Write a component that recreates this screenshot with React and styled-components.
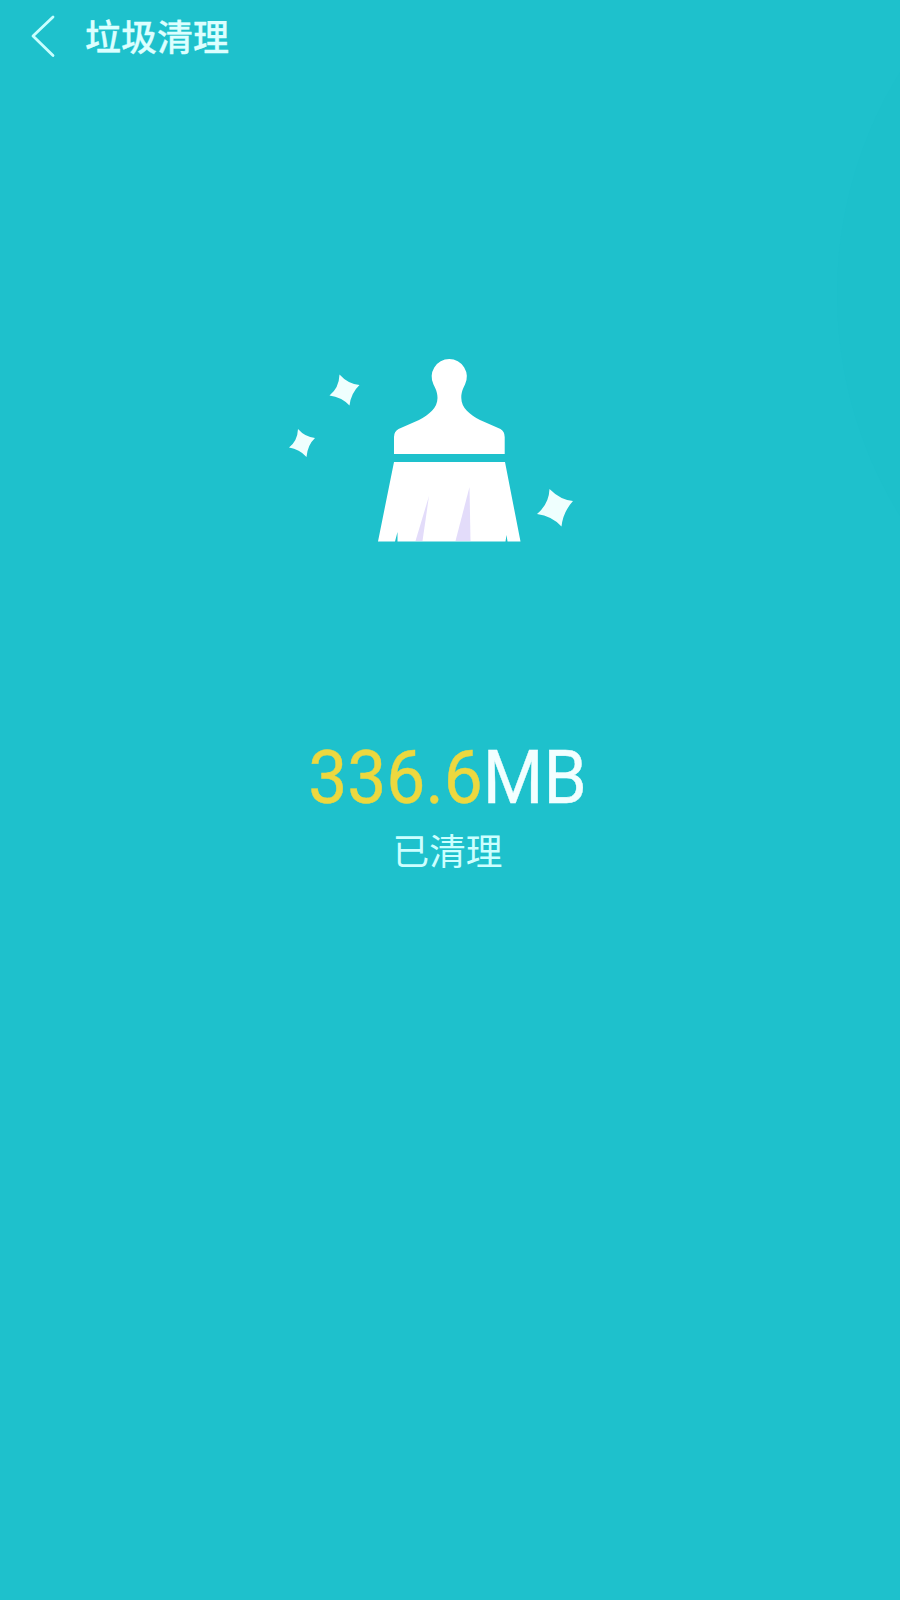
import React from "react";
import styled, { createGlobalStyle } from "styled-components";

const GlobalStyle = createGlobalStyle`
	body {
		margin: 0;
		background: #1ec1cc;
	}
`;

const Screen = styled.div`
	position: relative;
	width: 900px;
	height: 1600px;
	display: flex;
	flex-direction: column;
	align-items: center;
	overflow: hidden;
	box-sizing: border-box;
	background: #1ec1cc;
	color: #f2ffff;
	font-family: Roboto, "Noto Sans CJK SC", sans-serif;
`;

const Ripple = styled.div`
	position: absolute;
	left: 837px;
	top: -129px;
	width: 846px;
	height: 846px;
	border-radius: 50%;
	background: #1dc0cb;
`;

const Header = styled.header`
	position: relative;
	width: 100%;
	height: 74px;
	display: flex;
	align-items: center;
	padding-left: 28px;
	box-sizing: border-box;
`;

const BackButton = styled.button`
	display: flex;
	width: 30px;
	height: 44px;
	padding: 0;
	border: 0;
	background: none;
	color: #c8ffff;
`;

const Title = styled.h1`
	margin: 0 0 4px 27px;
	font-family: "Noto Sans CJK SC", sans-serif;
	font-size: 36px;
	font-weight: 500;
	line-height: 44px;
	color: #dcffff;
	-webkit-text-stroke: 0.3px #dcffff;
`;

const Illustration = styled.svg`
	position: relative;
	display: block;
	margin-top: 276px;
	width: 340px;
	height: 200px;
`;

const Result = styled.div`
	position: relative;
	display: flex;
	flex-direction: column;
	align-items: center;
	margin-top: 187px;
	padding-right: 5px;
`;

const Amount = styled.div`
	font-size: 69.5px;
	line-height: 84px;
	white-space: nowrap;
	transform: scaleY(1.06);
	-webkit-text-stroke: 0.4px currentColor;
`;

const Value = styled.span`
	color: #edd83f;
	-webkit-text-stroke: 0.4px #edd83f;
`;

const Status = styled.div`
	margin-top: 4px;
	font-family: "Noto Sans CJK SC", sans-serif;
	font-size: 36.7px;
	line-height: 48px;
	color: #ccffff;
`;

const BackIcon = () => (
	<svg width="30" height="44" viewBox="0 0 30 44" fill="none">
		<path
			d="M25 2L5 21L25 40.5"
			stroke="currentColor"
			strokeWidth="2.8"
			strokeLinecap="round"
			strokeLinejoin="round"
		/>
	</svg>
);

const Brush = () => (
	<Illustration viewBox="280 350 340 200">
		{/* handle */}
		<path
			fill="#fff"
			d="M394 454V437Q394 431.500 398.500 429L419 420C429 414.500 437.500 408 437.500 398C437.500 392 435.500 388.500 433.500 384.500A17.600 17.600 0 1 1 465 384.500C463 388.500 461.300 392 461.300 398C461.300 408 470 414.500 480 420L500.500 429Q504.700 431.500 504.700 437V454Z"
		/>
		{/* bristles */}
		<path
			fill="#fff"
			d="M394 462H505L520.500 541.500H507.500L506.500 535L505.500 541.500H397.500L397.500 532L395 541.500H378Z"
		/>
		<path fill="#e3dcfa" d="M429 496L422.500 541H415.500Z" />
		<path fill="#e3dcfa" d="M469.500 487L470.500 541H455.500Z" />
		{/* sparkles */}
		<g fill="#effffe">
			<path d="M339.500 374.500Q348 384 359.500 385Q351 393 349.500 405.500Q341.500 397 329.500 395.500Q339 388 339.500 374.500Z" />
			<path d="M298 429Q305 437 315 438Q307.500 445 306.500 457Q299.500 449 289 447.500Q297.500 441 298 429Z" />
			<path d="M549.500 489Q560.500 500 573 501Q563 512 561.500 526.500Q552 516 537 514Q549 504 549.500 489Z" />
		</g>
	</Illustration>
);

const App = () => (
	<>
		<GlobalStyle />
		<Screen>
			<Ripple />
			<Header>
				<BackButton aria-label="返回">
					<BackIcon />
				</BackButton>
				<Title>垃圾清理</Title>
			</Header>
			<Brush />
			<Result>
				<Amount>
					<Value>336.6</Value>MB
				</Amount>
				<Status>已清理</Status>
			</Result>
		</Screen>
	</>
);

export default App;
